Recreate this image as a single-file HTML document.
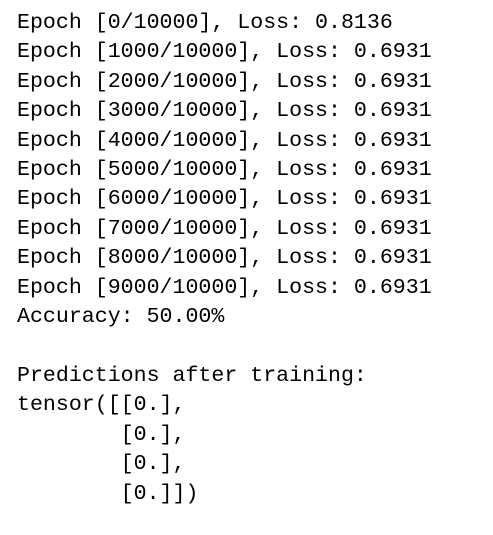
<!DOCTYPE html>
<html><head><meta charset="utf-8"><style>
html,body{margin:0;padding:0;background:#fff;width:493px;height:535px;overflow:hidden}
pre{margin:0;position:absolute;left:17px;top:9px;font-family:"Liberation Mono",monospace;font-size:21.6px;line-height:29.4px;color:#000}
</style></head><body>
<pre>Epoch [0/10000], Loss: 0.8136
Epoch [1000/10000], Loss: 0.6931
Epoch [2000/10000], Loss: 0.6931
Epoch [3000/10000], Loss: 0.6931
Epoch [4000/10000], Loss: 0.6931
Epoch [5000/10000], Loss: 0.6931
Epoch [6000/10000], Loss: 0.6931
Epoch [7000/10000], Loss: 0.6931
Epoch [8000/10000], Loss: 0.6931
Epoch [9000/10000], Loss: 0.6931
Accuracy: 50.00%

Predictions after training:
tensor([[0.],
        [0.],
        [0.],
        [0.]])</pre>
</body></html>
